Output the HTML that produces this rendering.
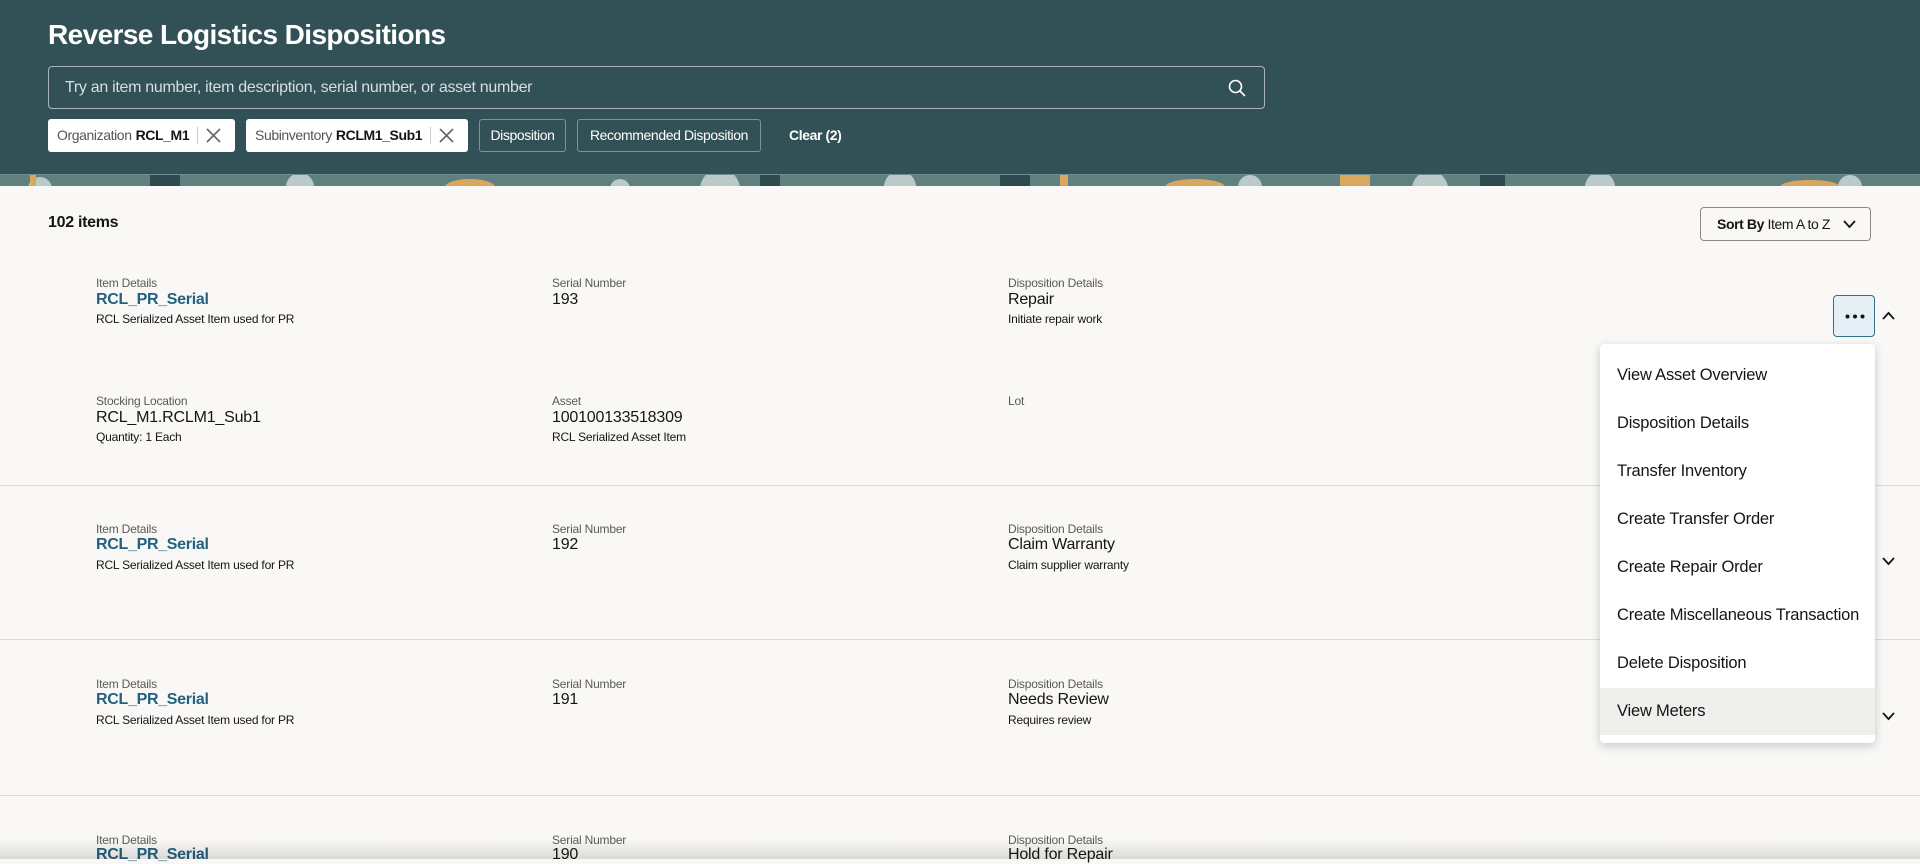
<!DOCTYPE html>
<html><head><meta charset="utf-8"><style>
*{margin:0;padding:0;box-sizing:border-box}
body{width:1920px;height:859px;overflow:hidden;background:#f9f8f6;font-family:"Liberation Sans",sans-serif;color:#161513;position:relative}
.a{position:absolute;white-space:nowrap}
.hdr{position:absolute;left:0;top:0;width:1920px;height:174px;background:#325156}
.strip{position:absolute;left:0;top:174px;width:1920px;height:12px;background:#6f8f8e;overflow:hidden}
.title{left:48px;top:19px;font-size:28px;font-weight:bold;color:#fff;letter-spacing:-0.6px}
.search{left:48px;top:66px;width:1217px;height:43px;border:1px solid #a9b7b8;border-radius:4px}
.search span{position:absolute;left:16px;top:12px;font-size:16px;color:#d7dedf;letter-spacing:-0.3px}
.chip{top:119px;height:33px;border-radius:3px;font-size:14px;line-height:33px;letter-spacing:-0.4px;display:flex;align-items:center}
.wc{background:#fff;color:#555;padding-left:9px}
.wc b{color:#161513;margin-left:4px}
.wc .sep{width:1px;height:17px;background:#ccc;margin:0 8px}
.oc{border:1px solid #7d9395;color:#fff;justify-content:center}
.lbl{font-size:12px;color:#5b5a57;letter-spacing:-0.2px}
.val{font-size:16px;letter-spacing:-0.2px}
.lnk{font-size:16px;font-weight:bold;color:#22627e;letter-spacing:-0.3px}
.sub{font-size:12px;letter-spacing:-0.2px}
.div{position:absolute;left:0;width:1920px;height:1px;background:#dedcd8}
.menu{left:1600px;top:344px;width:275px;height:399px;background:#fff;border-radius:4px;box-shadow:0 3px 10px rgba(0,0,0,.2)}
.mi{position:absolute;left:0;width:275px;height:47px;line-height:47px;padding-left:17px;font-size:16.5px;letter-spacing:-0.2px}
</style></head><body>
<div class="hdr"></div>
<div class="strip">
<svg width="1920" height="12">
<rect x="0" y="0" width="1920" height="12" fill="#5f807f"/>
<g fill="#b9cac9"><circle cx="40" cy="14" r="12"/><circle cx="300" cy="12" r="14"/><circle cx="620" cy="14" r="10"/><circle cx="900" cy="12" r="16"/><circle cx="1250" cy="12" r="12"/><circle cx="1600" cy="12" r="15"/><circle cx="1850" cy="12" r="12"/><circle cx="720" cy="14" r="20"/><circle cx="1430" cy="14" r="18"/></g>
<g fill="#d9a85e"><rect x="30" y="0" width="6" height="12"/><ellipse cx="470" cy="12" rx="25" ry="8"/><rect x="1060" y="0" width="8" height="12"/><ellipse cx="1195" cy="12" rx="30" ry="8"/><rect x="1340" y="0" width="30" height="12"/><ellipse cx="1810" cy="12" rx="30" ry="7"/></g>
<g fill="#2e4a4e"><rect x="150" y="0" width="30" height="12"/><rect x="760" y="0" width="20" height="12"/><rect x="1480" y="0" width="25" height="12"/><rect x="1000" y="0" width="30" height="12"/></g>
</svg></div>
<div class="a title">Reverse Logistics Dispositions</div>
<div class="a search"><span>Try an item number, item description, serial number, or asset number</span>
<svg style="position:absolute;right:18px;top:12px" width="18" height="18" viewBox="0 0 18 18"><circle cx="7.5" cy="7.5" r="6" fill="none" stroke="#fff" stroke-width="1.6"/><line x1="12" y1="12" x2="17" y2="17" stroke="#fff" stroke-width="1.6"/></svg></div>
<div class="a chip wc" style="left:48px;width:187px">Organization<b>RCL_M1</b><span class="sep"></span><svg width="15" height="15"><path d="M1 1L14 14M14 1L1 14" stroke="#666" stroke-width="1.6"/></svg></div>
<div class="a chip wc" style="left:246px;width:222px">Subinventory<b>RCLM1_Sub1</b><span class="sep"></span><svg width="15" height="15"><path d="M1 1L14 14M14 1L1 14" stroke="#666" stroke-width="1.6"/></svg></div>
<div class="a chip oc" style="left:479px;width:87px">Disposition</div>
<div class="a chip oc" style="left:577px;width:184px">Recommended Disposition</div>
<div class="a chip" style="left:789px;color:#fff;font-weight:bold">Clear (2)</div>

<div class="a" style="left:48px;top:214px;font-size:16px;font-weight:bold;letter-spacing:-0.3px">102 items</div>
<div class="a" style="left:1700px;top:207px;width:171px;height:34px;border:1px solid #8c8a86;border-radius:4px;font-size:14px;line-height:32px;padding-left:16px;letter-spacing:-0.4px"><b>Sort By</b> Item A to Z<svg style="position:absolute;right:14px;top:12px" width="13" height="9"><path d="M1 1L6.5 7L12 1" fill="none" stroke="#161513" stroke-width="1.8"/></svg></div>

<!-- row 1 -->
<div class="a lbl" style="left:96px;top:276px">Item Details</div>
<div class="a lnk" style="left:96px;top:291px">RCL_PR_Serial</div>
<div class="a sub" style="left:96px;top:312px">RCL Serialized Asset Item used for PR</div>
<div class="a lbl" style="left:552px;top:276px">Serial Number</div>
<div class="a val" style="left:552px;top:291px">193</div>
<div class="a lbl" style="left:1008px;top:276px">Disposition Details</div>
<div class="a val" style="left:1008px;top:291px">Repair</div>
<div class="a sub" style="left:1008px;top:312px">Initiate repair work</div>
<div class="a lbl" style="left:96px;top:394px">Stocking Location</div>
<div class="a val" style="left:96px;top:409px">RCL_M1.RCLM1_Sub1</div>
<div class="a sub" style="left:96px;top:430px">Quantity: 1 Each</div>
<div class="a lbl" style="left:552px;top:394px">Asset</div>
<div class="a val" style="left:552px;top:409px">100100133518309</div>
<div class="a sub" style="left:552px;top:430px">RCL Serialized Asset Item</div>
<div class="a lbl" style="left:1008px;top:394px">Lot</div>
<div class="a" style="left:1833px;top:295px;width:42px;height:42px;background:#e4f0f5;border:1px solid #2e6f8c;border-radius:4px"><svg style="position:absolute;left:11px;top:18px" width="20" height="5"><circle cx="2.5" cy="2.5" r="2" fill="#161513"/><circle cx="10" cy="2.5" r="2" fill="#161513"/><circle cx="17.5" cy="2.5" r="2" fill="#161513"/></svg></div>
<svg class="a" style="left:1882px;top:311px" width="13" height="9"><path d="M1 8L6.5 2L12 8" fill="none" stroke="#161513" stroke-width="1.8"/></svg>
<div class="div" style="top:485px"></div>

<!-- row 2 -->
<div class="a lbl" style="left:96px;top:522px">Item Details</div>
<div class="a lnk" style="left:96px;top:536px">RCL_PR_Serial</div>
<div class="a sub" style="left:96px;top:558px">RCL Serialized Asset Item used for PR</div>
<div class="a lbl" style="left:552px;top:522px">Serial Number</div>
<div class="a val" style="left:552px;top:536px">192</div>
<div class="a lbl" style="left:1008px;top:522px">Disposition Details</div>
<div class="a val" style="left:1008px;top:536px">Claim Warranty</div>
<div class="a sub" style="left:1008px;top:558px">Claim supplier warranty</div>
<svg class="a" style="left:1882px;top:557px" width="13" height="9"><path d="M1 1L6.5 7L12 1" fill="none" stroke="#161513" stroke-width="1.8"/></svg>
<div class="div" style="top:639px"></div>

<!-- row 3 -->
<div class="a lbl" style="left:96px;top:677px">Item Details</div>
<div class="a lnk" style="left:96px;top:691px">RCL_PR_Serial</div>
<div class="a sub" style="left:96px;top:713px">RCL Serialized Asset Item used for PR</div>
<div class="a lbl" style="left:552px;top:677px">Serial Number</div>
<div class="a val" style="left:552px;top:691px">191</div>
<div class="a lbl" style="left:1008px;top:677px">Disposition Details</div>
<div class="a val" style="left:1008px;top:691px">Needs Review</div>
<div class="a sub" style="left:1008px;top:713px">Requires review</div>
<svg class="a" style="left:1882px;top:712px" width="13" height="9"><path d="M1 1L6.5 7L12 1" fill="none" stroke="#161513" stroke-width="1.8"/></svg>
<div class="div" style="top:795px"></div>

<!-- row 4 -->
<div class="a lbl" style="left:96px;top:833px">Item Details</div>
<div class="a lnk" style="left:96px;top:846px">RCL_PR_Serial</div>
<div class="a lbl" style="left:552px;top:833px">Serial Number</div>
<div class="a val" style="left:552px;top:846px">190</div>
<div class="a lbl" style="left:1008px;top:833px">Disposition Details</div>
<div class="a val" style="left:1008px;top:846px">Hold for Repair</div>
<div class="a" style="left:0;top:839px;width:1920px;height:20px;background:linear-gradient(rgba(0,0,0,0),rgba(0,0,0,.12))"></div>

<div class="a menu">
<div class="mi" style="top:8px">View Asset Overview</div>
<div class="mi" style="top:56px">Disposition Details</div>
<div class="mi" style="top:104px">Transfer Inventory</div>
<div class="mi" style="top:152px">Create Transfer Order</div>
<div class="mi" style="top:200px">Create Repair Order</div>
<div class="mi" style="top:248px">Create Miscellaneous Transaction</div>
<div class="mi" style="top:296px">Delete Disposition</div>
<div class="mi" style="top:344px;background:#efefee">View Meters</div>
</div>
</body></html>
